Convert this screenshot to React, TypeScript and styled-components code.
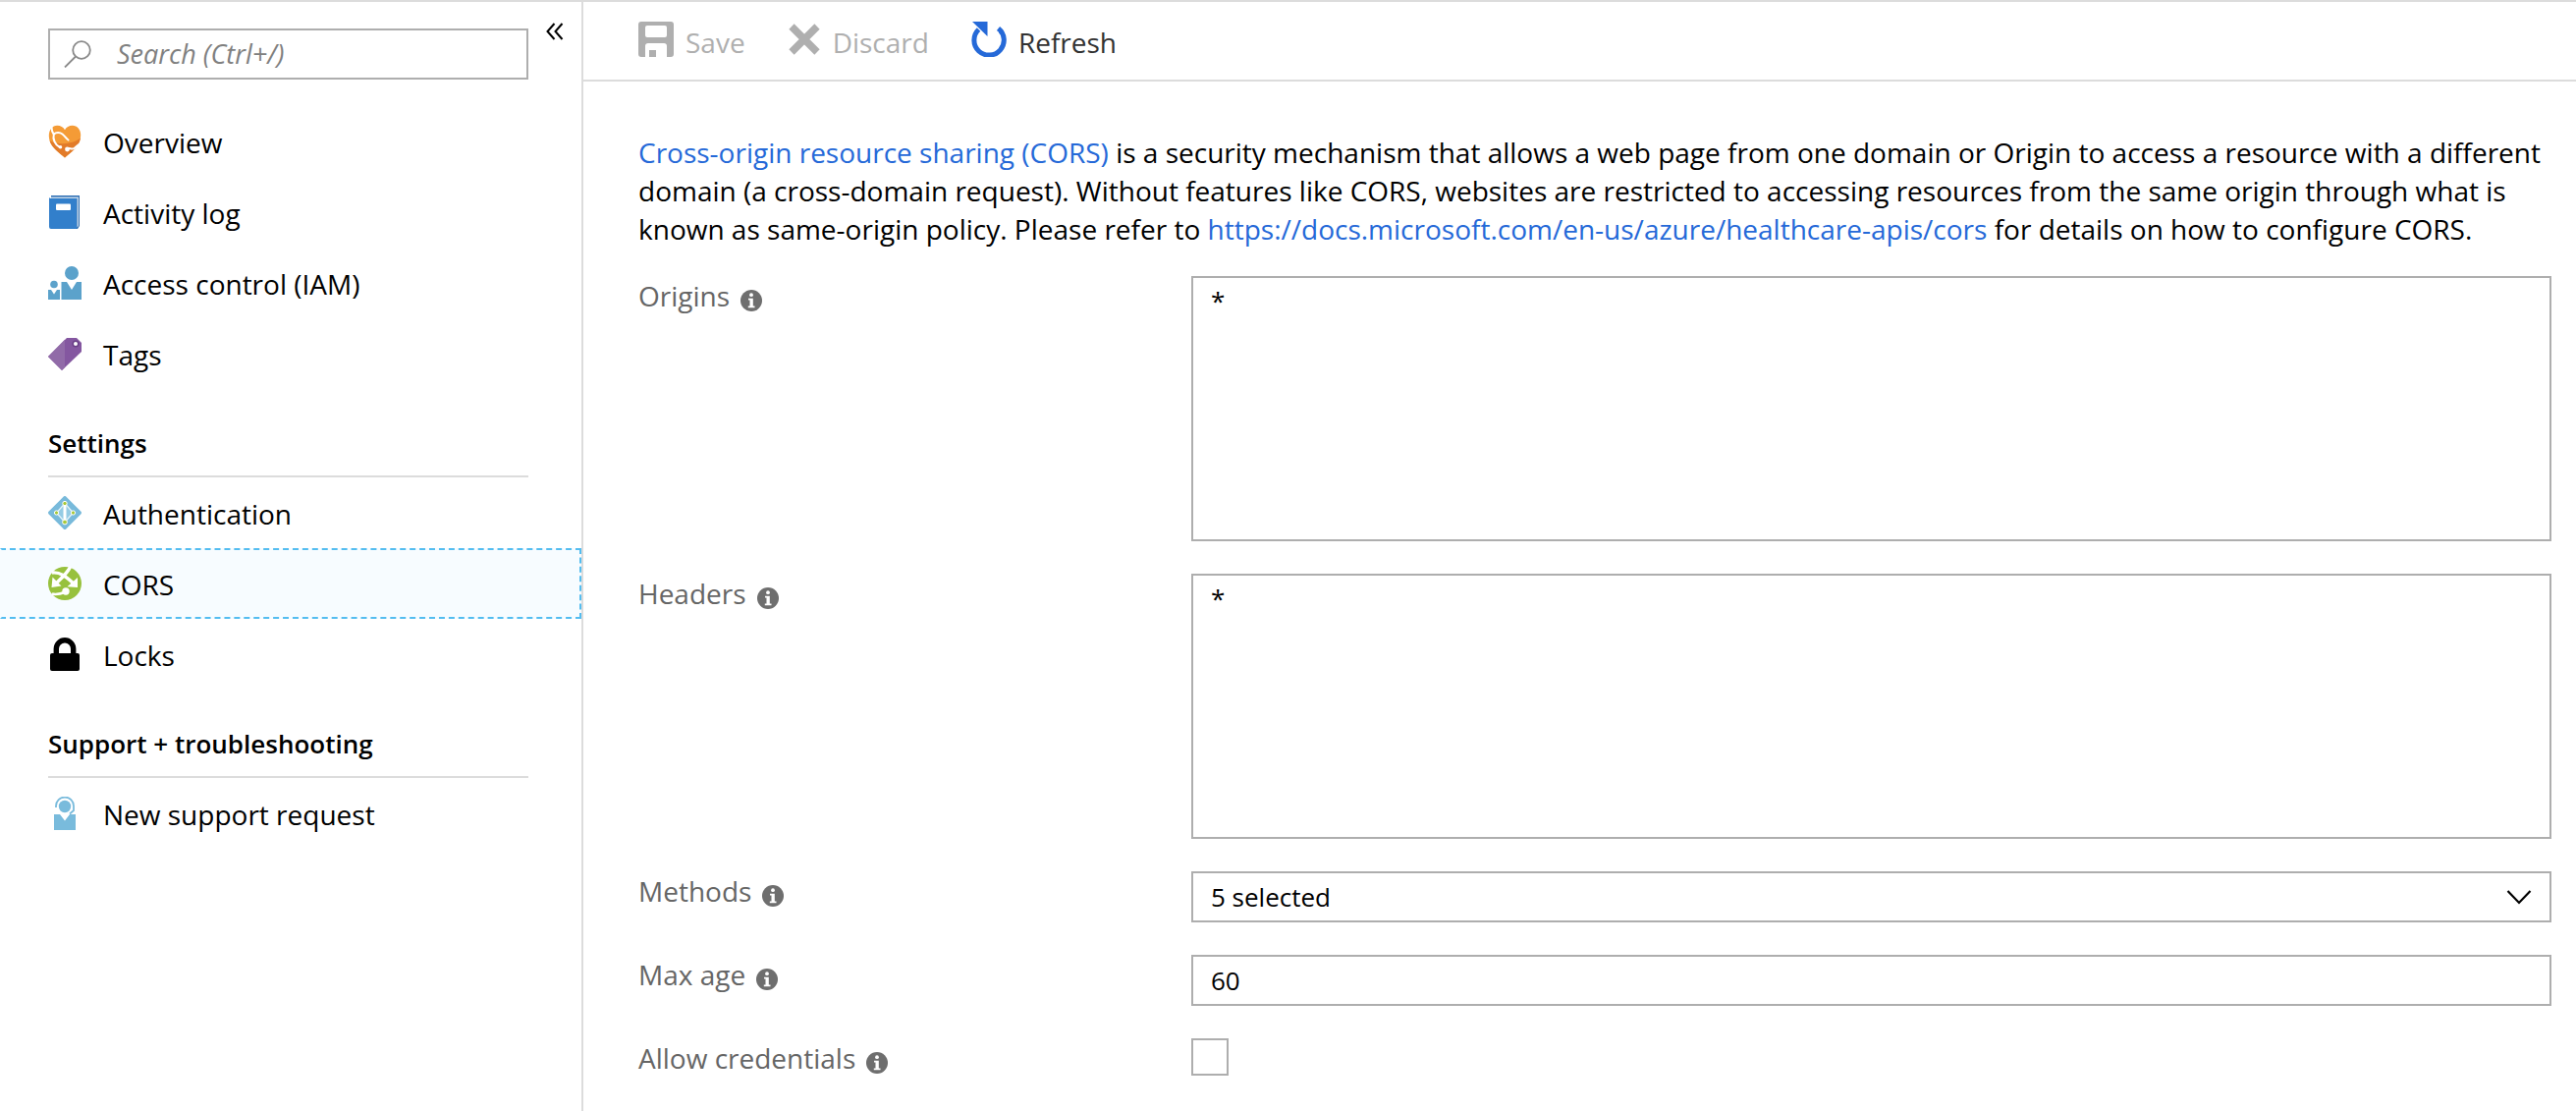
import React from "react";
import styled, { createGlobalStyle, css } from "styled-components";

const GlobalStyle = createGlobalStyle`
  *, *::before, *::after { box-sizing: border-box; }
  body {
    margin: 0;
    background: #fff;
    color: #000;
    font-family: "Segoe UI", "Open Sans", "Noto Sans", sans-serif;
    font-size: 28px;
    line-height: 39px;
  }
  button, input, select, textarea { font: inherit; color: inherit; }
`;

const line = "#dcdcdc";
const fieldBorder = "#aeaeae";
const link = "#2569d8";

const Page = styled.div`
  display: flex;
  min-height: 100vh;
  border-top: 2px solid ${line};
`;

const Sidebar = styled.aside`
  flex: none;
  width: 594px;
  border-right: 2px solid ${line};
`;

const SearchRow = styled.div`
  display: flex;
  align-items: flex-start;
  gap: 17px;
  padding: 20px 17px 27px 49px;
`;

const SearchBox = styled.label`
  display: flex;
  flex: 1;
  align-items: center;
  gap: 26px;
  height: 52px;
  margin-top: 7px;
  padding-left: 14px;
  border: 2px solid ${fieldBorder};
`;

const SearchInput = styled.input`
  flex: 1;
  min-width: 0;
  height: 44px;
  padding: 0 0 2px;
  border: 0;
  outline: 0;
  background: none;
  font-size: 27px;
  &::placeholder {
    color: #808080;
    opacity: 1;
    font-style: italic;
  }
`;

const CollapseButton = styled.button`
  display: flex;
  padding: 0;
  border: 0;
  background: none;
`;

const NavList = styled.ul`
  margin: 0;
  padding: 0;
  list-style: none;
`;

const NavLink = styled.a<{ $active?: boolean }>`
  display: flex;
  align-items: center;
  gap: 22px;
  height: 72px;
  padding: 0 47px;
  border: 2px dashed transparent;
  color: #000;
  text-decoration: none;
  ${(p) =>
    p.$active &&
    css`
      border-color: #54bdf0;
      border-left-color: transparent;
      background: #f7fcff;
    `}
`;

const NavText = styled.span`
  padding-top: 2px;
`;

const GroupTitle = styled.h2`
  height: 90px;
  margin: 0 54px 0 49px;
  padding-top: 36px;
  border-bottom: 2px solid ${line};
  font-size: 26px;
  font-weight: 600;
`;

const Main = styled.main`
  flex: 1;
  min-width: 0;
`;

const Toolbar = styled.div`
  display: flex;
  gap: 43px;
  height: 81px;
  padding: 0 56px;
  border-bottom: 2px solid ${line};
`;

const ToolButton = styled.button`
  display: flex;
  align-items: center;
  gap: 12px;
  padding: 0 0 3px;
  border: 0;
  background: none;
  color: #323232;
  &:disabled { color: #afafaf; }
`;

const ToolText = styled.span`
  padding-top: 6px;
`;

const Content = styled.div`
  padding: 53px 25px 34px 56px;
`;

const Intro = styled.p`
  margin: 0 0 28px;
`;

const Link = styled.a`
  color: ${link};
  text-decoration: none;
`;

const Form = styled.form`
  display: grid;
  grid-template-columns: 563px minmax(0, 1fr);
  row-gap: 33px;
`;

const LabelCell = styled.div`
  display: flex;
  align-items: flex-start;
  gap: 11px;
  padding-top: 1px;
  color: #666;
  svg { margin-top: 13px; }
`;

const fieldBox = css`
  display: block;
  width: 100%;
  margin: 0;
  padding: 0 18px;
  border: 2px solid ${fieldBorder};
  border-radius: 0;
  outline: 0;
  background: #fff;
  color: #000;
  font-size: 26px;
`;

const TextArea = styled.textarea`
  ${fieldBox}
  height: 270px;
  padding-top: 4px;
  resize: none;
`;

const TextInput = styled.input`
  ${fieldBox}
  height: 52px;
`;

const SelectWrap = styled.div`
  display: grid;
  align-items: center;
  & > * { grid-area: 1 / 1; }
  svg {
    justify-self: end;
    margin-right: 20px;
    pointer-events: none;
  }
`;

const Select = styled.select`
  ${fieldBox}
  height: 52px;
  appearance: none;
`;

const CheckBox = styled.input`
  width: 38px;
  height: 38px;
  margin: 0;
  border: 2px solid ${fieldBorder};
  background: #fff;
  appearance: none;
  &:checked { background: ${link}; }
`;

const Svg = styled.svg`
  flex: none;
  display: block;
`;

const Icon = ({ size = 34, children }: { size?: number; children: React.ReactNode }) => (
  <Svg width={size} height={size} viewBox={`0 0 ${size} ${size}`} fill="none" aria-hidden="true">
    {children}
  </Svg>
);

const HeartIcon = () => (
  <Icon>
    <path d="M17 33.500C11 28 .8 21.500.8 11.500C.8 5 4.500.8 9.200.8c3.500 0 6.300 1.700 7.800 4.400C18.500 2.500 21.300.8 24.800.8c4.700 0 8.400 4.200 8.400 9.700C33.200 21.500 23 28 17 33.500z" fill="#f49b36" />
    <path d="M1.500 16C10 21 25 20 33 13.500C31.500 23 22.500 28.500 17 33.500C11.500 28.500 3.500 23.500 1.500 16z" fill="#e27b29" />
    <path d="M3.500 2.500C3.500 6 4.500 8 5.800 9.800M5.800 9.800C8 7.500 12 7.600 14.500 9.500C17.500 11.800 18 14 20.500 15.500M5.800 9.800C4.500 14.500 7 20.500 12 23" stroke="#fff" strokeWidth="2" strokeLinecap="round" />
    <path d="M19.500 25.500C21 22 23.500 26 26.500 24C29 22.500 30 20.500 32.500 19.500" stroke="#fff" strokeWidth="2" strokeLinecap="round" />
    <circle cx="19.500" cy="25" r="2.400" fill="#fff" />
    <circle cx="12.500" cy="22.800" r="1.800" fill="#fff" />
  </Icon>
);

const BookIcon = () => (
  <Icon>
    <path d="M3 0h29v31l-2 3H3z" fill="#2f6fb3" />
    <path d="M3 1.500h28v29.500l-1.500 1.500V3H3z" fill="#c4d7ea" />
    <path d="M1 2.500C1 1.500 2 3 3.500 3H29v31H3a2 2 0 0 1-2-2z" fill="#327fcb" />
    <rect x="8" y="8.500" width="15" height="6.500" rx="1" fill="#fff" />
  </Icon>
);

const PeopleIcon = () => (
  <Icon>
    <g fill="#5ba2cb">
      <circle cx="24" cy="7" r="7" />
      <circle cx="6" cy="18.500" r="3.800" />
      <path d="M13.500 16H19l5 8 5-8h5v18H13.500zM0 24h3l3 4.500L9 24h3v10H0z" />
    </g>
  </Icon>
);

const TagIcon = () => (
  <Icon>
    <path d="M19 1h10l5 5v9L14 34 0 20z" fill="#8457a0" />
    <path d="M17 2.800V31L14 34 0 20z" fill="#916ba8" />
    <circle cx="28" cy="7" r="3.500" fill="#693f86" />
    <circle cx="28" cy="7" r="2" fill="#fff" />
  </Icon>
);

const AuthIcon = () => (
  <Icon>
    <path d="M15.500.8a2 2 0 0 1 3 0l15 15a2 2 0 0 1 0 2.500l-15 15a2 2 0 0 1-3 0l-15-15a2 2 0 0 1 0-2.500z" fill="#78badb" />
    <path d="M17 7.500L25.500 17 17 26.500 8.500 17z" fill="#94cbe4" />
    <path d="M17 7.500l8.500 9.500-8.500 9.500L8.500 17z" stroke="#e4f3fa" strokeWidth="1.300" />
    <path d="M17 8v18" stroke="#fff" strokeWidth="3" />
    <g fill="#a8c93a" stroke="#fff">
      <circle cx="17" cy="7.500" r="2.200" />
      <circle cx="17" cy="26.500" r="2.400" />
      <circle cx="8.500" cy="17" r="2.100" />
      <circle cx="25.500" cy="17" r="2.100" />
    </g>
  </Icon>
);

const CorsIcon = () => (
  <Icon>
    <circle cx="17" cy="17" r="17" fill="#97c13d" />
    <path d="M22.500 0C20 6 14 11 8 17M4 6C12 5 18 9.500 27 18" stroke="#fff" strokeWidth="3.400" />
    <path d="M4.500 10.500L3.500 21l10-1.500zM30 11v10l-10.500-.8z" fill="#fff" />
    <circle cx="18" cy="25" r="3.700" fill="#fff" />
    <path d="M4 27.500C9 29 13 27.500 18 25.500" stroke="#fff" strokeWidth="2.600" />
  </Icon>
);

const LockIcon = () => (
  <Icon>
    <path d="M8.300 18v-6.500a8.700 8.700 0 0 1 17.400 0V18" stroke="#000" strokeWidth="5.400" />
    <rect x="2" y="16" width="30" height="18" rx="2" fill="#000" />
  </Icon>
);

const SupportIcon = () => (
  <Icon>
    <circle cx="17" cy="10" r="6.200" fill="#79bbdc" />
    <path d="M8 11V9.500a9 9 0 0 1 18 0V14l-4 3.500" stroke="#79bbdc" strokeWidth="1.800" />
    <path d="M6 18h6l5 6.500 5-6.500h6v16H6z" fill="#79bbdc" />
  </Icon>
);

const InfoIcon = () => (
  <Icon size={22}>
    <circle cx="11" cy="11" r="11" fill="#6e6e6e" />
    <circle cx="11" cy="5.200" r="1.900" fill="#fff" />
    <path d="M8 8.800h4.800v7.700h1.700v1.700H7.800v-1.700h1.700v-6H8z" fill="#fff" />
  </Icon>
);

const SaveIcon = () => (
  <Icon size={36}>
    <path fillRule="evenodd" d="M3 0h30a3 3 0 0 1 3 3v30a3 3 0 0 1-3 3h-4V25a3 3 0 0 0-3-3H10a3 3 0 0 0-3 3v11H3a3 3 0 0 1-3-3V3a3 3 0 0 1 3-3zM9 4a2 2 0 0 0-2 2v8a2 2 0 0 0 2 2h18a2 2 0 0 0 2-2V6a2 2 0 0 0-2-2zM11 29h7v7h-7z" fill="#afafaf" />
  </Icon>
);

const DiscardIcon = () => (
  <Icon size={34}>
    <path d="M4 4l26 26M30 4L4 30" stroke="#afafaf" strokeWidth="7.500" />
  </Icon>
);

const RefreshIcon = () => (
  <Icon size={36}>
    <path d="M27.500 7A15.200 15.200 0 1 1 7.500 8" stroke={link} strokeWidth="5" />
    <path d="M1 0h15.500v15z" fill={link} />
  </Icon>
);

const mainNav = [
  { label: "Overview", icon: <HeartIcon /> },
  { label: "Activity log", icon: <BookIcon /> },
  { label: "Access control (IAM)", icon: <PeopleIcon /> },
  { label: "Tags", icon: <TagIcon /> },
];
const settingsNav = [
  { label: "Authentication", icon: <AuthIcon /> },
  { label: "CORS", icon: <CorsIcon />, active: true },
  { label: "Locks", icon: <LockIcon /> },
];
const supportNav = [{ label: "New support request", icon: <SupportIcon /> }];

type NavItem = { label: string; icon: React.ReactNode; active?: boolean };

const Nav = ({ items }: { items: NavItem[] }) => (
  <NavList>
    {items.map((item) => (
      <li key={item.label}>
        <NavLink href="#" $active={item.active} aria-current={item.active ? "page" : undefined}>
          {item.icon}
          <NavText>{item.label}</NavText>
        </NavLink>
      </li>
    ))}
  </NavList>
);

const FieldLabel = ({ id, children }: { id: string; children: string }) => (
  <LabelCell>
    <label htmlFor={id}>{children}</label>
    <InfoIcon />
  </LabelCell>
);

export default function App() {
  return (
    <>
      <GlobalStyle />
      <Page>
        <Sidebar>
          <SearchRow>
            <SearchBox>
              <Icon size={28}>
                <circle cx="18" cy="10" r="8.800" stroke="#8a8a8a" strokeWidth="1.800" />
                <path d="M12 16.500L1 27.500" stroke="#8a8a8a" strokeWidth="1.800" />
              </Icon>
              <SearchInput type="text" placeholder="Search (Ctrl+/)" aria-label="Search" />
            </SearchBox>
            <CollapseButton type="button" aria-label="Collapse menu">
              <Icon size={20}>
                <path d="M9.500 2L2.500 10l7 8M17.500 2l-7 8 7 8" stroke="#000" strokeWidth="2" />
              </Icon>
            </CollapseButton>
          </SearchRow>
          <nav>
            <Nav items={mainNav} />
            <GroupTitle>Settings</GroupTitle>
            <Nav items={settingsNav} />
            <GroupTitle>Support + troubleshooting</GroupTitle>
            <Nav items={supportNav} />
          </nav>
        </Sidebar>
        <Main>
          <Toolbar>
            <ToolButton type="button" disabled>
              <SaveIcon />
              <ToolText>Save</ToolText>
            </ToolButton>
            <ToolButton type="button" disabled>
              <DiscardIcon />
              <ToolText>Discard</ToolText>
            </ToolButton>
            <ToolButton type="button">
              <RefreshIcon />
              <ToolText>Refresh</ToolText>
            </ToolButton>
          </Toolbar>
          <Content>
            <Intro>
              <Link href="#">Cross-origin resource sharing (CORS)</Link> is a security mechanism that allows a web
              page from one domain or Origin to access a resource with a different domain (a cross-domain request).
              Without features like CORS, websites are restricted to accessing resources from the same origin through
              what is known as same-origin policy. Please refer to{" "}
              <Link href="#">https://docs.microsoft.com/en-us/azure/healthcare-apis/cors</Link> for details on how to
              configure CORS.
            </Intro>
            <Form>
              <FieldLabel id="origins">Origins</FieldLabel>
              <TextArea id="origins" defaultValue="*" />
              <FieldLabel id="headers">Headers</FieldLabel>
              <TextArea id="headers" defaultValue="*" />
              <FieldLabel id="methods">Methods</FieldLabel>
              <SelectWrap>
                <Select id="methods">
                  <option>5 selected</option>
                </Select>
                <Icon size={26}>
                  <path d="M1.500 7L13 19 24.500 7" stroke="#000" strokeWidth="2.200" />
                </Icon>
              </SelectWrap>
              <FieldLabel id="max-age">Max age</FieldLabel>
              <TextInput id="max-age" type="text" defaultValue="60" />
              <FieldLabel id="credentials">Allow credentials</FieldLabel>
              <CheckBox id="credentials" type="checkbox" />
            </Form>
          </Content>
        </Main>
      </Page>
    </>
  );
}
